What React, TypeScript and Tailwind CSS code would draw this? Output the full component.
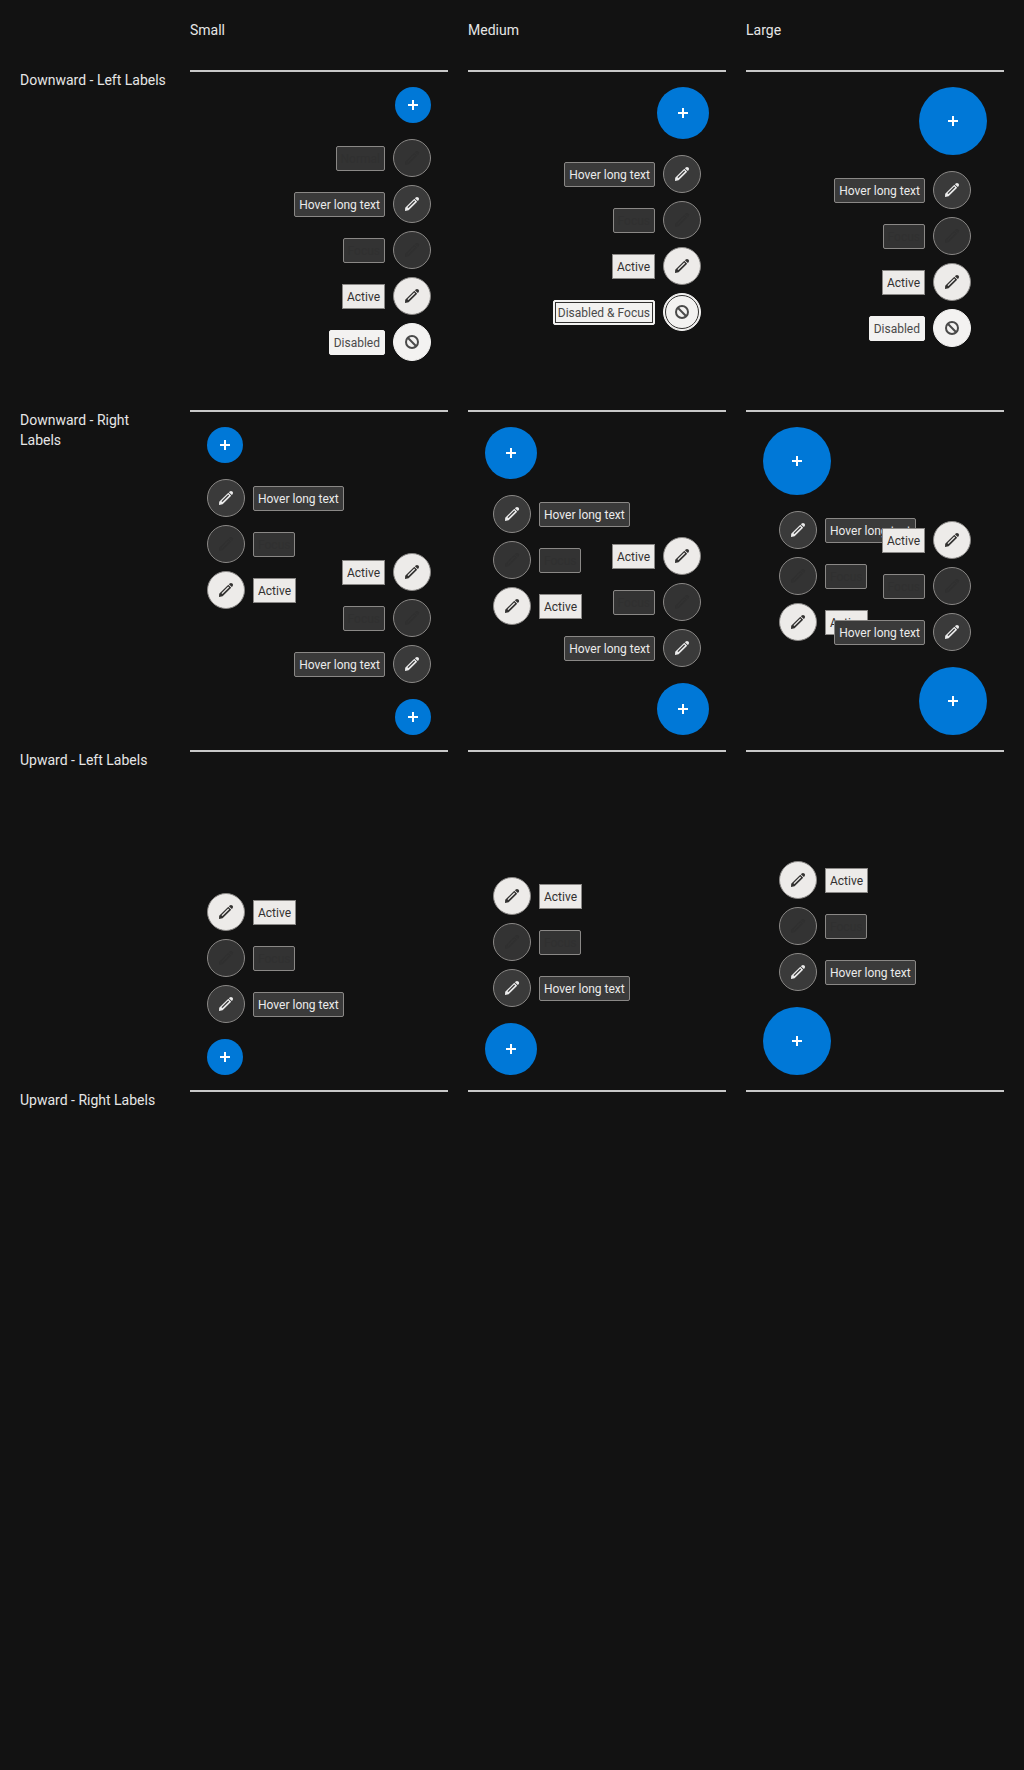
import type { ReactNode } from 'react';

type State = 'normal' | 'hover' | 'focus' | 'active' | 'disabled' | 'disabledFocus';
type Size = 'small' | 'medium' | 'large';
type Item = { text: string; state: State };

const skins: Record<State, string> = {
  normal: 'bg-[#333333] border-[#8a8886] text-[#303030]',
  focus: 'bg-[#333333] border-[#8a8886] text-[#303030]',
  hover: 'bg-[#3a3a3a] border-[#8a8886] text-[#ebebeb]',
  active: 'bg-[#edebe9] border-[#8a8886] text-[#323130]',
  disabled: 'bg-[#f3f2f1] border-[#f3f2f1] text-[#4a4a4a]',
  disabledFocus:
    'bg-[#f3f2f1] border-[#f3f2f1] text-[#4a4a4a] outline outline-1 outline-[#323130] -outline-offset-3',
};

const fabSizes: Record<Size, string> = { small: 'size-9', medium: 'size-13', large: 'size-17' };
const insets: Record<Size, string> = { small: 'px-0', medium: 'px-2', large: 'px-4' };

function EditIcon() {
  return (
    <svg viewBox="0 0 16 16" className="size-4" fill="currentColor">
      <path
        fillRule="evenodd"
        d="M10.9 2.2 11.7 1.4Q13.1.3 14.4 1.6 15.7 2.9 14.6 4.3L13.8 5.1ZM10.3 2.8 13.2 5.7 4.6 14.3 1 15 1.2 11.8ZM10.2 4.5 3.5 11.2 4.4 12.1 11.1 5.4Z"
      />
    </svg>
  );
}

function BlockIcon() {
  return (
    <svg viewBox="0 0 16 16" className="size-4" fill="none" stroke="currentColor" strokeWidth="2">
      <circle cx="8" cy="8" r="6" />
      <path d="M3.8 3.8 12.2 12.2" />
    </svg>
  );
}

function Fab({ size }: { size: Size }) {
  return (
    <button className={`flex shrink-0 items-center justify-center rounded-full bg-[#0078d7] ${fabSizes[size]}`}>
      <svg viewBox="0 0 10 10" className="size-2.5 fill-white" shapeRendering="crispEdges">
        <path d="M4 0H6V4H10V6H6V10H4V6H0V4H4Z" />
      </svg>
    </button>
  );
}

function Action({ item, left }: { item: Item; left: boolean }) {
  const blocked = item.state === 'disabled' || item.state === 'disabledFocus';
  const corner = item.state === 'active' ? 'rounded-none' : 'rounded-xs';
  return (
    <li className={`flex h-[38px] items-center gap-2 ${left ? 'flex-row-reverse' : 'flex-row'}`}>
      <span className={`flex size-[38px] items-center justify-center rounded-full border ${skins[item.state]}`}>
        {blocked ? <BlockIcon /> : <EditIcon />}
      </span>
      <span
        className={`mt-px h-[25px] border px-1 text-[12px] leading-[23px] whitespace-nowrap ${corner} ${skins[item.state]}`}
      >
        <span className="block translate-y-[0.5px]">{item.text}</span>
      </span>
    </li>
  );
}

function SpeedDial({ size, items, left, up }: { size: Size; items: Item[]; left: boolean; up: boolean }) {
  return (
    <div
      className={`isolate col-start-1 row-start-1 flex gap-4 p-[15px] px-[17px] ${
        up ? 'flex-col-reverse' : 'flex-col'
      } ${left ? 'items-end' : 'items-start'}`}
    >
      <Fab size={size} />
      <ul className={`flex gap-2 ${insets[size]} ${up ? 'flex-col-reverse' : 'flex-col'}`}>
        {items.map((item) => (
          <Action key={item.text} item={item} left={left} />
        ))}
      </ul>
    </div>
  );
}

const hover: Item = { text: 'Hover long text', state: 'hover' };
const focus: Item = { text: 'Focus', state: 'focus' };
const active: Item = { text: 'Active', state: 'active' };
const normal: Item = { text: 'Normal', state: 'normal' };
const disabled: Item = { text: 'Disabled', state: 'disabled' };
const disabledFocus: Item = { text: 'Disabled & Focus', state: 'disabledFocus' };

const base = [hover, focus, active];
const fullSets: Record<Size, Item[]> = {
  small: [normal, ...base, disabled],
  medium: [...base, disabledFocus],
  large: [...base, disabled],
};
const sizes: Size[] = ['small', 'medium', 'large'];

function Row({ title, render }: { title: string; render?: (size: Size) => ReactNode }) {
  return (
    <section className="grid h-[340px] grid-cols-[150px_258px_258px_258px] gap-x-5">
      <h2>{title}</h2>
      {sizes.map((size) => (
        <div key={size} className="grid border-t-2 border-[#c8c8c8]">
          {render?.(size)}
        </div>
      ))}
    </section>
  );
}

export default function App() {
  return (
    <main className="h-[1770px] w-[1024px] bg-[#121212] px-5 pt-5 font-[Roboto,sans-serif] text-[14px] leading-5 text-[#e6e6e6]">
      <header className="grid h-[50px] grid-cols-[150px_258px_258px_258px] gap-x-5">
        <span />
        <h2>Small</h2>
        <h2>Medium</h2>
        <h2>Large</h2>
      </header>
      <Row
        title="Downward - Left Labels"
        render={(size) => <SpeedDial size={size} items={fullSets[size]} left up={false} />}
      />
      <Row
        title="Downward - Right Labels"
        render={(size) => (
          <>
            <SpeedDial size={size} items={base} left={false} up={false} />
            <SpeedDial size={size} items={base} left up />
          </>
        )}
      />
      <Row
        title="Upward - Left Labels"
        render={(size) => <SpeedDial size={size} items={base} left={false} up />}
      />
      <Row title="Upward - Right Labels" />
    </main>
  );
}
